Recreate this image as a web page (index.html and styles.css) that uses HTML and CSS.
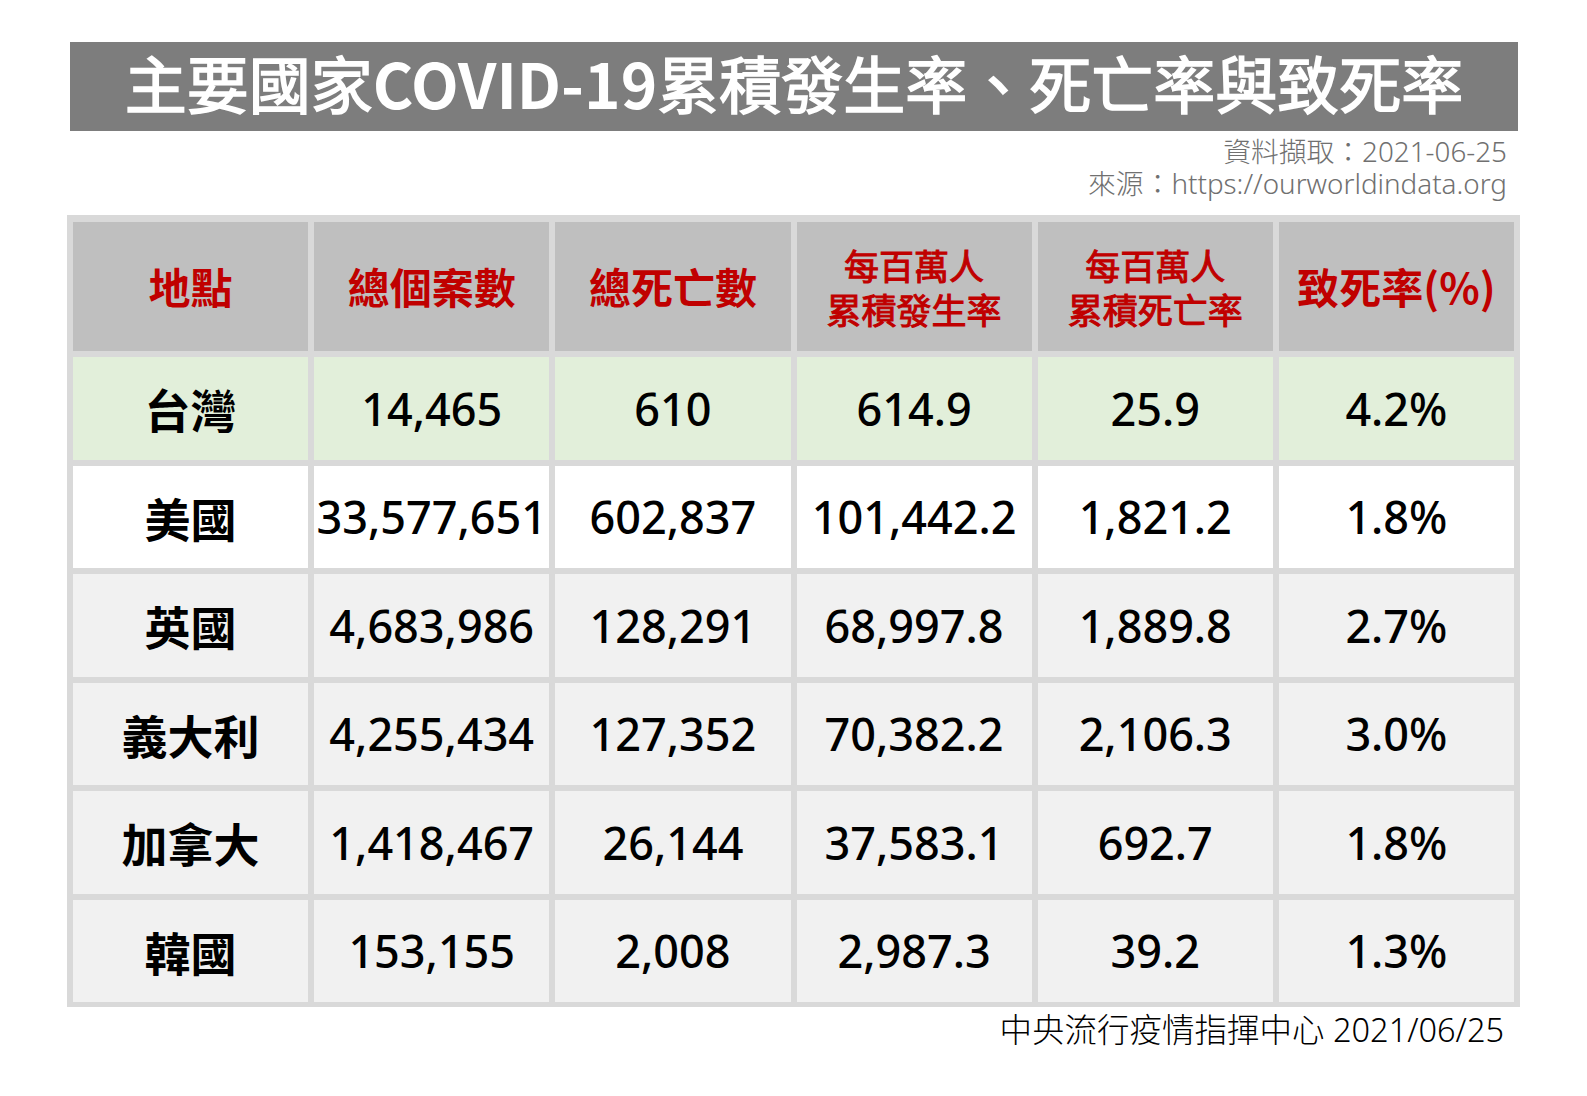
FILE: index.html
```html
<!DOCTYPE html>
<html lang="zh-Hant">
<head>
<meta charset="utf-8">
<title>主要國家COVID-19累積發生率、死亡率與致死率</title>
<link rel="stylesheet" href="styles.css">
</head>
<body>
<div class="page">
  <div class="title-bar">
    <h1 class="title">主要國家<span class="latin">COVID-19</span>累積發生率、死亡率與致死率</h1>
  </div>
  <div class="source">
    <div>資料擷取：2021-06-25</div>
    <div>來源：https://ourworldindata.org</div>
  </div>
  <div class="table">
    <div class="cell head">地點</div>
    <div class="cell head">總個案數</div>
    <div class="cell head">總死亡數</div>
    <div class="cell head small">每百萬人<br>累積發生率</div>
    <div class="cell head small">每百萬人<br>累積死亡率</div>
    <div class="cell head">致死率(%)</div>

    <div class="cell green name">台灣</div>
    <div class="cell green num">14,465</div>
    <div class="cell green num">610</div>
    <div class="cell green num">614.9</div>
    <div class="cell green num">25.9</div>
    <div class="cell green num">4.2%</div>

    <div class="cell white name">美國</div>
    <div class="cell white num">33,577,651</div>
    <div class="cell white num">602,837</div>
    <div class="cell white num">101,442.2</div>
    <div class="cell white num">1,821.2</div>
    <div class="cell white num">1.8%</div>

    <div class="cell grey name">英國</div>
    <div class="cell grey num">4,683,986</div>
    <div class="cell grey num">128,291</div>
    <div class="cell grey num">68,997.8</div>
    <div class="cell grey num">1,889.8</div>
    <div class="cell grey num">2.7%</div>

    <div class="cell grey name">義大利</div>
    <div class="cell grey num">4,255,434</div>
    <div class="cell grey num">127,352</div>
    <div class="cell grey num">70,382.2</div>
    <div class="cell grey num">2,106.3</div>
    <div class="cell grey num">3.0%</div>

    <div class="cell grey name">加拿大</div>
    <div class="cell grey num">1,418,467</div>
    <div class="cell grey num">26,144</div>
    <div class="cell grey num">37,583.1</div>
    <div class="cell grey num">692.7</div>
    <div class="cell grey num">1.8%</div>

    <div class="cell grey name">韓國</div>
    <div class="cell grey num">153,155</div>
    <div class="cell grey num">2,008</div>
    <div class="cell grey num">2,987.3</div>
    <div class="cell grey num">39.2</div>
    <div class="cell grey num">1.3%</div>
  </div>
  <div class="footer">中央流行疫情指揮中心 2021/06/25</div>
</div>
</body>
</html>
```

FILE: styles.css
```css
html, body {
  margin: 0;
  padding: 0;
  background: #ffffff;
}

body {
  font-family: "Noto Sans CJK TC", "Noto Sans", sans-serif;
  color: #000000;
}

.page {
  width: 1453px;
  padding: 42px 0 0 67px;
}

.title-bar {
  margin: 0 2px 0 3px;
  height: 89px;
  background: #7d7d7d;
  display: flex;
  align-items: center;
  justify-content: center;
}

.title {
  margin: -10px 0 0 0;
  font-size: 62px;
  font-weight: 400;
  -webkit-text-stroke: 1.6px #ffffff;
  line-height: 1;
  color: #ffffff;
  white-space: nowrap;
}

.title .latin {
  font-weight: 700;
  -webkit-text-stroke: 0;
}

.source {
  margin-top: 4px;
  padding-right: 13px;
  text-align: right;
  font-family: "Noto Sans", "Noto Sans CJK TC", sans-serif;
  font-size: 27.8px;
  font-weight: 300;
  line-height: 32px;
  color: #707070;
}

.table {
  margin-top: 16px;
  padding: 7px 6px 5px 6px;
  background: #d9d9d9;
  display: grid;
  grid-template-columns: repeat(6, 1fr);
  grid-template-rows: 129px repeat(6, 102.5px);
  gap: 6px;
}

.cell {
  display: flex;
  align-items: center;
  justify-content: center;
  text-align: center;
}

.head {
  background: #bfbfbf;
  color: #c00000;
  font-size: 42px;
  font-weight: 700;
  line-height: 1.2;
}

.head.small {
  font-size: 35px;
  font-weight: 400;
  -webkit-text-stroke: 1px #c00000;
  line-height: 44px;
}

.green {
  background: #e2efda;
}

.white {
  background: #ffffff;
}

.grey {
  background: #f1f1f1;
}

.name {
  font-size: 46px;
  font-weight: 700;
}

.num {
  font-family: "Noto Sans", "Noto Sans CJK TC", sans-serif;
  font-size: 45px;
  font-weight: 500;
}

.footer {
  margin-top: 3px;
  padding-right: 16px;
  text-align: right;
  font-family: "Noto Sans", "Noto Sans CJK TC", sans-serif;
  font-size: 32.5px;
  font-weight: 300;
  line-height: 40px;
  color: #000000;
}
```
